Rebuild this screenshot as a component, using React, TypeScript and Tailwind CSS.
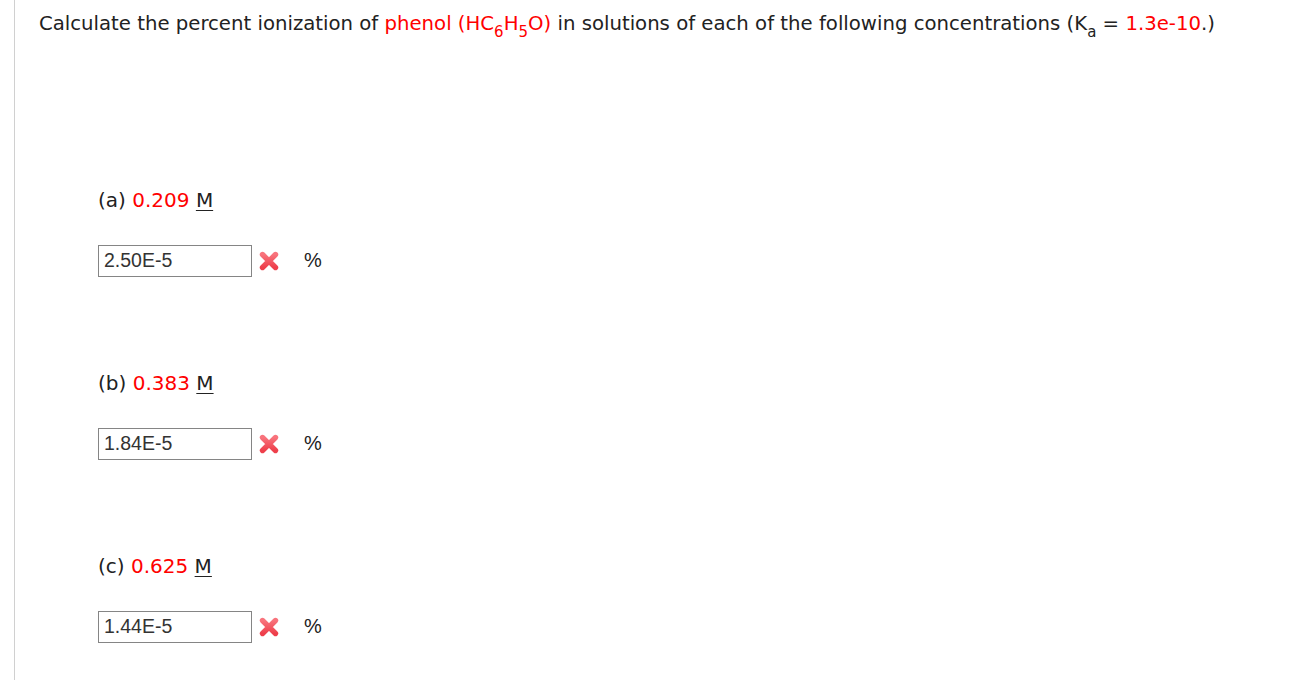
import React from "react";

const XMark = () => (
  <svg width="22" height="22" viewBox="0 0 22 22" className="block">
    <defs>
      <linearGradient id="xg" x1="0" y1="0" x2="0" y2="1">
        <stop offset="0" stopColor="#f8737c" />
        <stop offset="1" stopColor="#ee3f4b" />
      </linearGradient>
    </defs>
    <path d="M4.5 4.5 L17.5 17.5 M17.5 4.5 L4.5 17.5" stroke="url(#xg)" strokeWidth="5.4" strokeLinecap="round" fill="none" />
  </svg>
);

const Part = ({ letter, conc, value, first }: { letter: string; conc: string; value: string; first?: boolean }) => (
  <div className={first ? "mt-[152px] ml-[83px]" : "mt-[94px] ml-[83px]"}>
    <div className="h-[24px] leading-[24px] text-[20px] text-[#222] whitespace-nowrap">
      ({letter}) <span className="text-[#ff0000]">{conc}</span>{" "}
      <span className="underline underline-offset-[3px] decoration-1">M</span>
    </div>
    <div className="mt-[33px] flex items-center">
      <div
        className="w-[154px] h-[32px] border border-[#858585] pl-[5px] flex items-center text-[19.5px] text-[#333]"
        style={{ fontFamily: '"Liberation Sans", Arial, sans-serif' }}
      >
        {value}
      </div>
      <div className="ml-[6px]">
        <XMark />
      </div>
      <div
        className="ml-[24px] text-[20px] text-[#222] -mt-[3px]"
        style={{ fontFamily: '"Liberation Sans", Arial, sans-serif' }}
      >
        %
      </div>
    </div>
  </div>
);

export default function App() {
  return (
    <div className="w-[1309px] h-[680px] bg-white overflow-hidden" style={{ fontFamily: '"DejaVu Sans", Verdana, sans-serif' }}>
      <div className="ml-[14px] h-full border-l border-[#d0d0d0] flex flex-col">
        <div className="pt-[12px] pl-[24px] h-[36px] leading-[24px] text-[19.7px] text-[#222] whitespace-nowrap">
          Calculate the percent ionization of{" "}
          <span className="text-[#ff0000]">
            phenol (HC<sub className="text-[15px] align-[-3px]">6</sub>H<sub className="text-[15px] align-[-3px]">5</sub>O)
          </span>{" "}
          in solutions of each of the following concentrations (K<sub className="text-[15px] align-[-3px]">a</sub> ={" "}
          <span className="text-[#ff0000]">1.3e-10</span>.)
        </div>
        <Part letter="a" conc="0.209" value="2.50E-5" first />
        <Part letter="b" conc="0.383" value="1.84E-5" />
        <Part letter="c" conc="0.625" value="1.44E-5" />
      </div>
    </div>
  );
}
